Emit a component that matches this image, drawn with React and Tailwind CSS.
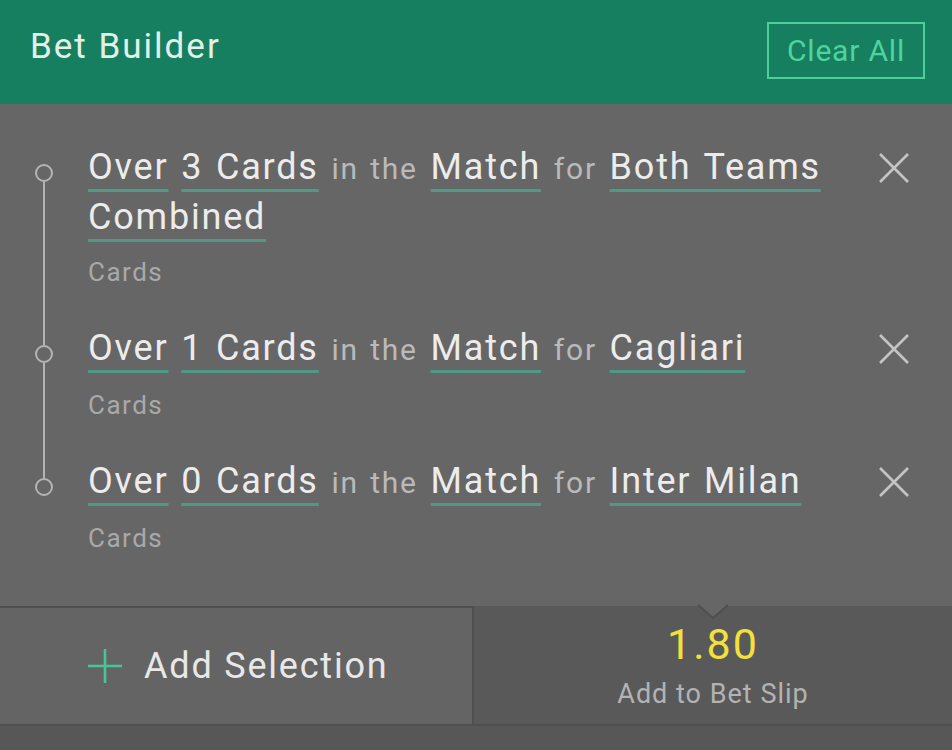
import React from "react";

const U = ({ children }) => (
  <span className="text-[#ececec] underline decoration-[#4f9a87] decoration-[3px] underline-offset-[10px]">
    {children}
  </span>
);
const L = ({ children }) => <span className="text-[#bababa] text-[30px]">{children}</span>;

const XIcon = () => (
  <svg width="32" height="32" viewBox="0 0 32 32" className="block">
    <path d="M2 2 L30 30 M30 2 L2 30" stroke="#c4c4c4" strokeWidth="2.6" fill="none" />
  </svg>
);

const Row = ({ first, last, children }) => (
  <div className="flex">
    <div className="w-[88px] flex flex-col items-center pr-[1px]">
      <div className={`w-[2px] h-[21px] ${first ? "" : "bg-[#b4b4b4]"}`} />
      <div className="w-[18px] h-[18px] rounded-full border-2 border-[#b4b4b4]" />
      <div className={`w-[2px] flex-1 ${last ? "" : "bg-[#b4b4b4]"}`} />
    </div>
    <div className="flex-1 pb-[34px]">
      <div className="text-[36px] leading-[48px] tracking-[0.05em] [word-spacing:2px]">{children}</div>
      <div className="mt-[13px] text-[26px] leading-[36px] tracking-[1.5px] text-[#a9a9a9]">Cards</div>
    </div>
    <div className="w-[118px] flex justify-center pt-[9px] pl-[2px]">
      <div className="h-[32px]"><XIcon /></div>
    </div>
  </div>
);

export default function App() {
  return (
    <div className="w-[952px] h-[750px] overflow-hidden flex flex-col bg-[#666666]" style={{ fontFamily: "Roboto, 'Noto Sans', sans-serif" }}>
      <div className="h-[104px] shrink-0 bg-[#167f5f] flex items-center justify-between pl-[30px] pr-[27px]">
        <div className="text-[35px] tracking-[2px] text-[#e4efea] -mt-[10px]">Bet Builder</div>
        <div className="w-[158px] h-[57px] border-2 border-[#4ccf9b] flex items-center justify-center text-[30px] tracking-[0.8px] text-[#4fd39f] -mt-[3px]">
          Clear All
        </div>
      </div>
      <div className="flex-1 pt-[39px]">
        <Row first>
          <U>Over</U> <U>3 Cards</U> <L>in the</L> <U>Match</U> <L>for</L> <U>Both Teams Combined</U>
        </Row>
        <Row>
          <U>Over</U> <U>1 Cards</U> <L>in the</L> <U>Match</U> <L>for</L> <U>Cagliari</U>
        </Row>
        <Row last>
          <U>Over</U> <U>0 Cards</U> <L>in the</L> <U>Match</U> <L>for</L> <U>Inter Milan</U>
        </Row>
      </div>
      <div className="h-[120px] shrink-0 flex border-t-2 border-b-2 border-[#4f4f4f]">
        <div className="w-[474px] bg-[#646464] border-r-2 border-[#4f4f4f] flex items-center pl-[88px] gap-[22px]">
          <svg width="34" height="34" viewBox="0 0 34 34">
            <path d="M17 0 V34 M0 17 H34" stroke="#45c696" strokeWidth="2.6" />
          </svg>
          <span className="text-[36px] tracking-[0.05em] text-[#e8e8e8]">Add Selection</span>
        </div>
        <div className="flex-1 bg-[#595959] relative flex flex-col items-center justify-center -mt-[2px]">
          <svg className="absolute -top-[2px] left-[224px]" width="30" height="16" viewBox="0 0 30 16">
            <path d="M0 0 L15 14 L30 0 Z" fill="#666666" />
            <path d="M0 1 L15 14 L30 1" stroke="#4f4f4f" strokeWidth="2" fill="none" />
          </svg>
          <div className="text-[43px] leading-[50px] tracking-[2px] text-[#f4e03b]">1.80</div>
          <div className="mt-[7px] text-[27px] leading-[36px] tracking-[1px] text-[#b3b3b3]">Add to Bet Slip</div>
        </div>
      </div>
      <div className="h-[24px] shrink-0 bg-[#575757]" />
    </div>
  );
}
